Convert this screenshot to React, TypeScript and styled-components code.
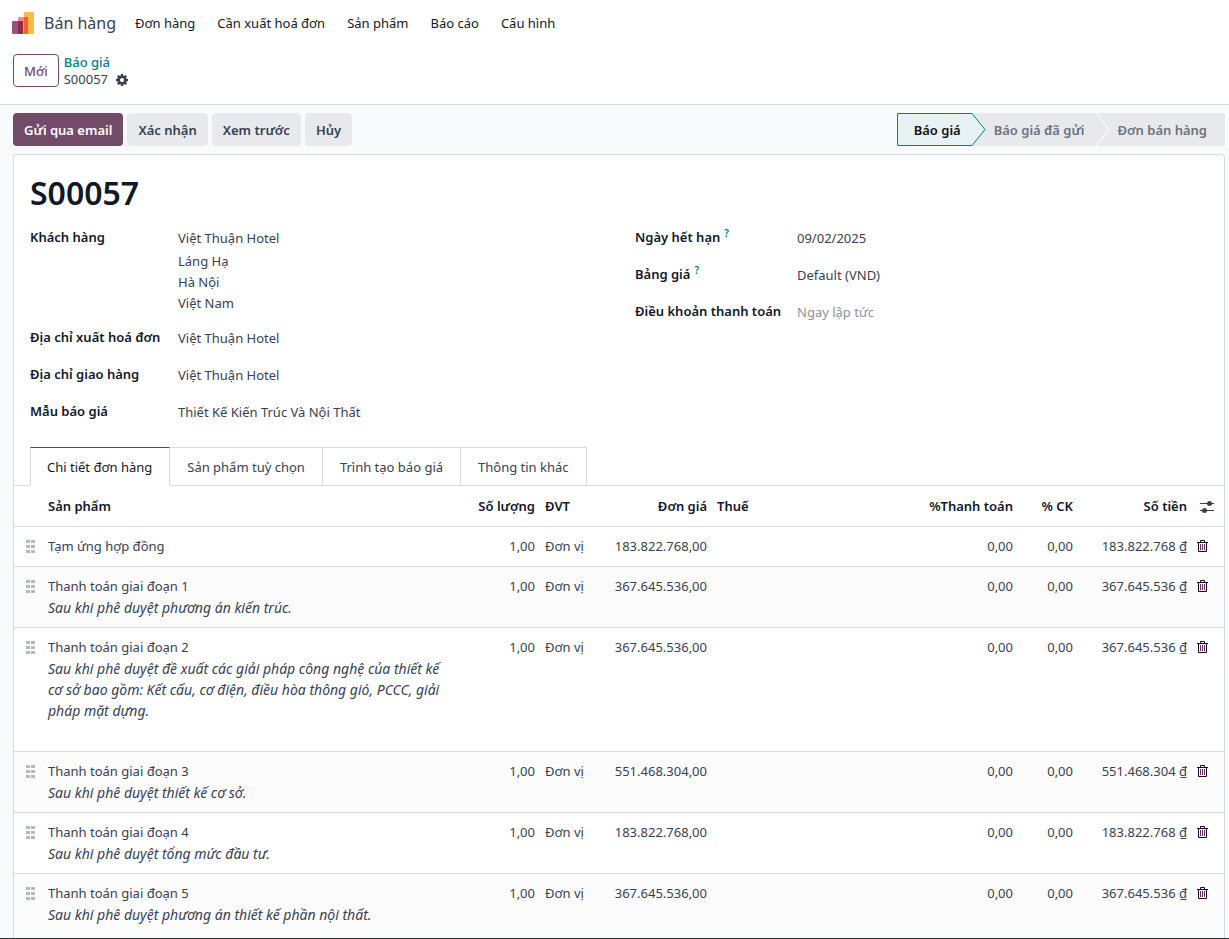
import React from 'react';
import styled, { createGlobalStyle, css } from 'styled-components';

const GlobalStyle = createGlobalStyle`
  *, *::before, *::after { box-sizing: border-box; }
  body {
    margin: 0;
    background: #f9fafb;
    color: #374151;
    font-family: 'Noto Sans', 'Open Sans', sans-serif;
    font-size: 13px;
    line-height: 21px;
  }
  button { font: inherit; color: inherit; cursor: pointer; }
  a { color: inherit; text-decoration: none; }
`;

const Page = styled.div`
  display: flex;
  flex-direction: column;
  height: 100vh;
  overflow: hidden;
  border-bottom: 1px solid #2b2e33;
`;

const Navbar = styled.header`
  display: flex;
  align-items: center;
  height: 46px;
  padding: 0 12px;
  background: #fff;
`;

const Brand = styled.a`
  display: flex;
  align-items: center;
  gap: 10px;
  margin-right: 19px;
  font-size: 16px;
`;

const Menu = styled.nav`
  display: flex;
  gap: 22px;
  color: #111827;
`;

const ControlPanel = styled.div`
  display: flex;
  align-items: flex-start;
  gap: 5px;
  height: 59px;
  padding: 8px 13px 0;
  background: #fff;
  border-bottom: 1px solid #d8dadd;
`;

const NewButton = styled.button`
  height: 33px;
  padding: 1px 10px 0;
  border: 1px solid #714b67;
  border-radius: 4px;
  background: #fff;
  color: #714b67;
  font-weight: 500;
`;

const Crumbs = styled.div`
  display: flex;
  flex-direction: column;
  line-height: 17px;
`;

const CrumbLink = styled.a`
  color: #017e84;
  font-weight: 500;
`;

const CrumbCurrent = styled.div`
  display: flex;
  align-items: center;
  gap: 8px;
`;

const IconButton = styled.button`
  display: inline-flex;
  padding: 0;
  border: 0;
  background: none;
`;

const StatusRow = styled.div`
  display: flex;
  justify-content: space-between;
  padding: 8px 4px 8px 13px;
`;

const Actions = styled.div`
  display: flex;
  gap: 4px;
`;

const ActionButton = styled.button<{ $primary?: boolean }>`
  height: 33px;
  padding: 1px 11px 0;
  border: 0;
  border-radius: 4px;
  font-weight: 600;
  background: ${p => (p.$primary ? '#714b67' : '#e7e9ed')};
  color: ${p => (p.$primary ? '#fff' : '#374151')};
`;

const Stages = styled.div`
  display: flex;
`;

const Stage = styled.button<{ $active?: boolean }>`
  position: relative;
  height: 33px;
  padding: 1px 17px 0 16px;
  border: 0;
  background: #e7e9ed;
  color: #6b7280;
  font-weight: 600;
  & + & { padding-left: 22px; padding-right: 11px; }
  &:last-child { padding-right: 18px; border-radius: 0 2px 2px 0; }
  ${p =>
    p.$active &&
    css`
      padding-right: 11px;
      border: 1px solid #017e84;
      border-right: 0;
      border-radius: 2px 0 0 2px;
      background: #e6f2f3;
      color: #111;
    `}
`;

const StageArrow = styled.svg<{ $outlined?: boolean }>`
  position: absolute;
  z-index: 1;
  top: ${p => (p.$outlined ? '-1px' : '0')};
  left: 100%;
`;

const Sheet = styled.main`
  flex: 1;
  min-height: 0;
  margin: 0 4px 0 13px;
  overflow: hidden;
  background: #fff;
  border: 1px solid #d8dadd;
  border-bottom: 0;
  border-radius: 4px 4px 0 0;
`;

const Title = styled.h1`
  margin: 16px 16px 12px;
  color: #111827;
  font-size: 32px;
  line-height: 44px;
  font-weight: 600;
`;

const Groups = styled.div`
  display: grid;
  grid-template-columns: 1fr 1fr;
  gap: 32px;
  padding: 0 16px;
`;

const Fields = styled.dl<{ $label: number }>`
  display: grid;
  grid-template-columns: ${p => p.$label}px 1fr;
  align-content: start;
  row-gap: 15px;
  margin: 0;
`;

const Label = styled.dt`
  color: #111827;
  font-weight: 600;
  white-space: nowrap;
`;

const Help = styled.sup`
  margin-left: 4px;
  color: #017e84;
  font-size: 10px;
  line-height: 10px;
`;

const Value = styled.dd<{ $muted?: boolean }>`
  margin: 0;
  padding-top: 1px;
  color: ${p => (p.$muted ? '#8e939c' : 'inherit')};
`;

const Address = styled.div`
  padding-top: 2px;
  margin-bottom: -2px;
`;

const Tabs = styled.div`
  display: flex;
  margin-top: 24px;
  padding: 0 16px;
  box-shadow: inset 0 -1px #d8dadd;
`;

const Tab = styled.button<{ $active?: boolean }>`
  height: 39px;
  padding: 1px 17px 0;
  border: 1px solid #d8dadd;
  border-left-width: 0;
  background: #fff;
  ${p =>
    p.$active &&
    css`
      padding-left: 16px;
      border-left-width: 1px;
      border-top-color: #5b4156;
      border-bottom-color: #fff;
      color: #111827;
    `}
`;

const Lines = styled.table`
  width: 100%;
  table-layout: fixed;
  border-collapse: collapse;
`;

const Col = styled.col<{ $w?: number }>`
  width: ${p => (p.$w ? `${p.$w}px` : 'auto')};
`;

const Row = styled.tr<{ $shaded?: boolean }>`
  background: ${p => (p.$shaded ? '#fcfcfc' : '#fff')};
  border-bottom: 1px solid #d8dadd;
`;

const cell = css<{ $end?: boolean }>`
  padding: 9px 5px;
  text-align: ${p => (p.$end ? 'right' : 'left')};
  vertical-align: top;
  white-space: nowrap;
`;

const Head = styled.th<{ $end?: boolean }>`
  ${cell}
  padding-top: 10px;
  color: #111827;
  font-weight: 600;
`;

const Cell = styled.td<{ $end?: boolean }>`
  ${cell}
  tr:last-child > & { padding-bottom: 30px; }
`;

const IconCell = styled.td`
  padding: 13px 5px 0;
  text-align: left;
  vertical-align: top;
  line-height: 0;
`;

const HandleCell = styled(IconCell)`
  padding: 12px 0 0 12px;
`;

const OptionsHead = styled(IconCell)`
  padding: 15px 0 0 8px;
`;

const Description = styled.div`
  font-size: 14px;
  font-style: italic;
  white-space: pre;
`;

const Logo = () => (
  <svg width="22" height="22" viewBox="0 0 22 22" aria-hidden="true">
    <path d="M13 0h8a1 1 0 0 1 1 1v20a1 1 0 0 1-1 1h-9V1a1 1 0 0 1 1-1z" fill="#fbb945" />
    <path d="M7 5h9v16a1 1 0 0 1-1 1H6V6a1 1 0 0 1 1-1z" fill="#fc868b" />
    <path d="M12 5h4v16a1 1 0 0 1-1 1h-3z" fill="#f86126" />
    <path d="M1 9h10v13H1a1 1 0 0 1-1-1V10a1 1 0 0 1 1-1z" fill="#985184" />
    <path d="M6 9h5v12a1 1 0 0 1-1 1H6z" fill="#962b48" />
  </svg>
);

const Gear = () => (
  <svg width="12" height="12" viewBox="0 0 1536 1536" fill="#374151" aria-hidden="true">
    <path d="M1024 768q0-106-75-181t-181-75-181 75-75 181 75 181 181 75 181-75 75-181zm512-109v222q0 12-8 23t-20 13l-185 28q-19 54-39 91 35 50 107 138 10 12 10 25t-9 23q-27 37-99 108t-94 71q-12 0-26-9l-138-108q-44 23-91 38-16 136-29 186-7 28-36 28H657q-14 0-24.500-8.500T621 1506l-28-184q-49-16-90-37l-141 107q-10 9-25 9-14 0-25-11-126-114-165-168-7-10-7-23 0-12 8-23 15-21 51-66.500t54-70.500q-27-50-41-99L29 913q-13-2-21-12.500T0 877V655q0-12 8-23t19-13l186-28q14-46 39-92-40-57-107-138-10-12-10-24 0-10 9-23 26-36 98.500-107.500T337 135q13 0 26 10l138 107q44-23 91-38 16-136 29-186 7-28 36-28h222q14 0 24.500 8.500T915 30l28 184q49 16 90 37l142-107q9-9 24-9 13 0 25 10 129 119 165 170 7 8 7 22 0 12-8 23-15 21-51 66.500t-54 70.500q26 50 41 98l183 28q13 2 21 12.500t8 23.500z" />
  </svg>
);

const Handle = () => (
  <svg width="9" height="14" viewBox="0 0 9 14" fill="#b5b9bf" role="img" aria-label="Kéo để sắp xếp">
    {[1, 6, 11].map(y => (
      <React.Fragment key={y}>
        <rect x="0" y={y} width="4" height="3" />
        <rect x="5" y={y} width="4" height="3" />
      </React.Fragment>
    ))}
  </svg>
);

const Trash = () => (
  <svg width="11" height="13" viewBox="0 0 11 13" fill="none" stroke="#1c061b" aria-hidden="true">
    <path d="M0 2.500h11M3.500 2V.500h4V2M1.500 3v8.500h8V3" />
    <path d="M3.500 4v6M5.500 4v6M7.500 4v6" stroke="#6a2b66" />
  </svg>
);

const Sliders = () => (
  <svg width="14" height="12" viewBox="0 0 14 12" aria-hidden="true">
    <path d="M0 2.500h14M0 9.500h14" stroke="#374151" />
    <circle cx="9.500" cy="2.500" r="2.500" fill="#374151" />
    <circle cx="4.500" cy="9.500" r="2.500" fill="#374151" />
  </svg>
);

const menu = ['Đơn hàng', 'Cần xuất hoá đơn', 'Sản phẩm', 'Báo cáo', 'Cấu hình'];
const tabs = ['Chi tiết đơn hàng', 'Sản phẩm tuỳ chọn', 'Trình tạo báo giá', 'Thông tin khác'];

const lines = [
  { name: 'Tạm ứng hợp đồng', note: '', amount: '183.822.768' },
  { name: 'Thanh toán giai đoạn 1', note: 'Sau khi phê duyệt phương án kiến trúc.', amount: '367.645.536' },
  {
    name: 'Thanh toán giai đoạn 2',
    note:
      'Sau khi phê duyệt đề xuất các giải pháp công nghệ của thiết kế\ncơ sở bao gồm: Kết cấu, cơ điện, điều hòa thông gió, PCCC, giải\npháp mặt dựng.\n\u00a0',
    amount: '367.645.536',
  },
  { name: 'Thanh toán giai đoạn 3', note: 'Sau khi phê duyệt thiết kế cơ sở.', amount: '551.468.304' },
  { name: 'Thanh toán giai đoạn 4', note: 'Sau khi phê duyệt tổng mức đầu tư.', amount: '183.822.768' },
  {
    name: 'Thanh toán giai đoạn 5',
    note: 'Sau khi phê duyệt phương án thiết kế phần nội thất.',
    amount: '367.645.536',
  },
];

export default function App() {
  return (
    <Page>
      <GlobalStyle />
      <Navbar>
        <Brand href="#">
          <Logo />
          Bán hàng
        </Brand>
        <Menu>
          {menu.map(item => (
            <a href="#" key={item}>{item}</a>
          ))}
        </Menu>
      </Navbar>
      <ControlPanel>
        <NewButton>Mới</NewButton>
        <Crumbs>
          <CrumbLink href="#">Báo giá</CrumbLink>
          <CrumbCurrent>
            S00057
            <IconButton aria-label="Tác vụ"><Gear /></IconButton>
          </CrumbCurrent>
        </Crumbs>
      </ControlPanel>
      <StatusRow>
        <Actions>
          <ActionButton $primary>Gửi qua email</ActionButton>
          <ActionButton>Xác nhận</ActionButton>
          <ActionButton>Xem trước</ActionButton>
          <ActionButton>Hủy</ActionButton>
        </Actions>
        <Stages>
          <Stage $active>
            Báo giá
            <StageArrow $outlined width="14" height="33" viewBox="0 0 14 33">
              <path d="M0 .5L13 16.500L0 32.500" fill="#e6f2f3" stroke="#017e84" />
            </StageArrow>
          </Stage>
          <Stage>
            Báo giá đã gửi
            <StageArrow width="14" height="33" viewBox="0 0 14 33">
              <path d="M0 0L13 16.500L0 33" fill="#e7e9ed" stroke="#fff" />
            </StageArrow>
          </Stage>
          <Stage>Đơn bán hàng</Stage>
        </Stages>
      </StatusRow>
      <Sheet>
        <Title>S00057</Title>
        <Groups>
          <Fields $label={148}>
            <Label>Khách hàng</Label>
            <Value>
              Việt Thuận Hotel
              <Address>
                Láng Hạ<br />
                Hà Nội<br />
                Việt Nam
              </Address>
            </Value>
            <Label>Địa chỉ xuất hoá đơn</Label>
            <Value>Việt Thuận Hotel</Value>
            <Label>Địa chỉ giao hàng</Label>
            <Value>Việt Thuận Hotel</Value>
            <Label>Mẫu báo giá</Label>
            <Value>Thiết Kế Kiến Trúc Và Nội Thất</Value>
          </Fields>
          <Fields $label={162}>
            <Label>Ngày hết hạn<Help>?</Help></Label>
            <Value>09/02/2025</Value>
            <Label>Bảng giá<Help>?</Help></Label>
            <Value>Default (VND)</Value>
            <Label>Điều khoản thanh toán</Label>
            <Value $muted>Ngay lập tức</Value>
          </Fields>
        </Groups>
        <Tabs role="tablist">
          {tabs.map((tab, i) => (
            <Tab key={tab} role="tab" aria-selected={i === 0} $active={i === 0}>{tab}</Tab>
          ))}
        </Tabs>
        <Lines>
          <colgroup>
            <Col $w={29} />
            <Col $w={400} />
            <Col $w={97} />
            <Col $w={60} />
            <Col $w={112} />
            <Col />
            <Col $w={110} />
            <Col $w={60} />
            <Col $w={114} />
            <Col $w={32} />
          </colgroup>
          <thead>
            <Row>
              <Head />
              <Head>Sản phẩm</Head>
              <Head $end>Số lượng</Head>
              <Head>ĐVT</Head>
              <Head $end>Đơn giá</Head>
              <Head>Thuế</Head>
              <Head $end>%Thanh toán</Head>
              <Head $end>% CK</Head>
              <Head $end>Số tiền</Head>
              <OptionsHead as="th">
                <IconButton aria-label="Cột tuỳ chọn"><Sliders /></IconButton>
              </OptionsHead>
            </Row>
          </thead>
          <tbody>
            {lines.map((line, i) => (
              <Row key={line.name} $shaded={i % 2 === 1}>
                <HandleCell><Handle /></HandleCell>
                <Cell>
                  {line.name}
                  {line.note && <Description>{line.note}</Description>}
                </Cell>
                <Cell $end>1,00</Cell>
                <Cell>Đơn vị</Cell>
                <Cell $end>{line.amount},00</Cell>
                <Cell />
                <Cell $end>0,00</Cell>
                <Cell $end>0,00</Cell>
                <Cell $end>{line.amount} ₫</Cell>
                <IconCell>
                  <IconButton aria-label="Xoá dòng"><Trash /></IconButton>
                </IconCell>
              </Row>
            ))}
          </tbody>
        </Lines>
      </Sheet>
    </Page>
  );
}
